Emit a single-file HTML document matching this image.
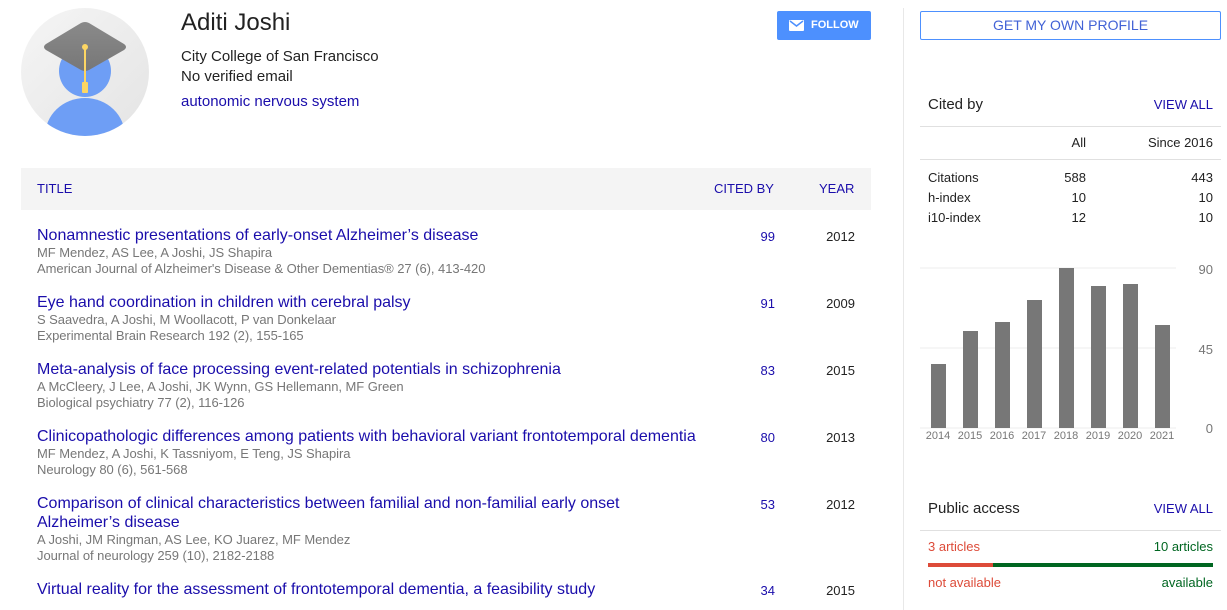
<!DOCTYPE html>
<html><head><meta charset="utf-8"><style>
*{margin:0;padding:0;box-sizing:border-box}
body{width:1227px;height:610px;overflow:hidden;background:#fff;font-family:"Liberation Sans",Arial,sans-serif;color:#222;position:relative}
.a{position:absolute;white-space:nowrap}
.lk{color:#1a0dab}
.t{font-size:16px;color:#1a0dab;line-height:19px}
.g{font-size:13px;color:#777;line-height:16px;letter-spacing:-0.05px}
.n{font-size:13px;color:#222;text-align:right}
.c{position:absolute;left:740px;width:35px;text-align:right;font-size:13px;color:#1a0dab}
.y{position:absolute;left:815px;width:40px;text-align:right;font-size:13px}
</style></head><body>
<svg class="a" style="left:20px;top:8px" width="130" height="130" viewBox="0 0 130 130">
<defs><clipPath id="c"><circle cx="65" cy="64" r="64"/></clipPath>
<linearGradient id="bg" x1="0" y1="0" x2="1" y2="1"><stop offset="0" stop-color="#f5f5f5"/><stop offset="1" stop-color="#e4e4e4"/></linearGradient>
<linearGradient id="cap" x1="0" y1="0" x2="0" y2="1"><stop offset="0" stop-color="#8a8a8a"/><stop offset="1" stop-color="#777"/></linearGradient></defs>
<circle cx="65" cy="64" r="64" fill="url(#bg)"/>
<g clip-path="url(#c)">
<circle cx="65" cy="63" r="26" fill="#6e9ef5"/>
<ellipse cx="65" cy="128" rx="40" ry="38" fill="#6e9ef5"/>
</g>
<path d="M61 15 Q65 13 69 15 L104 36 Q108 39 104 42 L69 62 Q65 64 61 62 L26 42 Q22 39 26 36 Z" fill="url(#cap)"/>
<line x1="65" y1="39" x2="65" y2="78" stroke="#fdd663" stroke-width="2"/>
<circle cx="65" cy="39" r="3" fill="#fdd663"/>
<rect x="62" y="74" width="6" height="11" rx="1" fill="#fdd663"/>
</svg>
<div class="a" style="left:181px;top:9px;font-size:24px;color:#222">Aditi Joshi</div>
<div class="a" style="left:181px;top:48px;font-size:15px">City College of San Francisco</div>
<div class="a" style="left:181px;top:68px;font-size:15px">No verified email</div>
<div class="a lk" style="left:181px;top:93px;font-size:15px">autonomic nervous system</div>
<div class="a" style="left:777px;top:11px;width:94px;height:29px;background:#4d90fe;border-radius:2px;color:#fff;font-size:11px;font-weight:bold;line-height:29px;padding-left:34px">FOLLOW
<svg class="a" style="left:12px;top:9px" width="15" height="11" viewBox="0 0 15 11"><rect width="15" height="11" rx="1" fill="#fff"/><path d="M1 1 L7.5 6 L14 1" stroke="#4d90fe" stroke-width="1.5" fill="none"/></svg></div>
<div class="a" style="left:903px;top:8px;width:1px;height:602px;background:#e8e8e8"></div>
<div class="a" style="left:920px;top:11px;width:301px;height:29px;border:1px solid #4d90fe;border-radius:2px;color:#4262d6;font-size:14px;line-height:27px;text-align:center">GET MY OWN PROFILE</div>

<div class="a" style="left:21px;top:168px;width:850px;height:42px;background:#f4f4f4"></div>
<div class="a lk" style="left:37px;top:181px;font-size:13px">TITLE</div>
<div class="a lk" style="left:714px;top:181px;font-size:13px">CITED BY</div>
<div class="a lk" style="left:819px;top:181px;font-size:13px">YEAR</div>

<div class="a" style="left:37px;top:226px">
<div class="t">Nonamnestic presentations of early-onset Alzheimer’s disease</div>
<div class="g">MF Mendez, AS Lee, A Joshi, JS Shapira</div>
<div class="g">American Journal of Alzheimer's Disease &amp; Other Dementias® 27 (6), 413-420</div></div>
<div class="a" style="left:37px;top:293px">
<div class="t">Eye hand coordination in children with cerebral palsy</div>
<div class="g">S Saavedra, A Joshi, M Woollacott, P van Donkelaar</div>
<div class="g">Experimental Brain Research 192 (2), 155-165</div></div>
<div class="a" style="left:37px;top:360px">
<div class="t">Meta-analysis of face processing event-related potentials in schizophrenia</div>
<div class="g">A McCleery, J Lee, A Joshi, JK Wynn, GS Hellemann, MF Green</div>
<div class="g">Biological psychiatry 77 (2), 116-126</div></div>
<div class="a" style="left:37px;top:427px">
<div class="t">Clinicopathologic differences among patients with behavioral variant frontotemporal dementia</div>
<div class="g">MF Mendez, A Joshi, K Tassniyom, E Teng, JS Shapira</div>
<div class="g">Neurology 80 (6), 561-568</div></div>
<div class="a" style="left:37px;top:494px">
<div class="t">Comparison of clinical characteristics between familial and non-familial early onset<br>Alzheimer’s disease</div>
<div class="g">A Joshi, JM Ringman, AS Lee, KO Juarez, MF Mendez</div>
<div class="g">Journal of neurology 259 (10), 2182-2188</div></div>
<div class="a" style="left:37px;top:580px">
<div class="t">Virtual reality for the assessment of frontotemporal dementia, a feasibility study</div></div>

<div class="c" style="top:229px">99</div>
<div class="c" style="top:296px">91</div>
<div class="c" style="top:363px">83</div>
<div class="c" style="top:430px">80</div>
<div class="c" style="top:497px">53</div>
<div class="c" style="top:583px">34</div>
<div class="y" style="top:229px">2012</div>
<div class="y" style="top:296px">2009</div>
<div class="y" style="top:363px">2015</div>
<div class="y" style="top:430px">2013</div>
<div class="y" style="top:497px">2012</div>
<div class="y" style="top:583px">2015</div>

<div class="a" style="left:928px;top:96px;font-size:15px">Cited by</div>
<div class="a lk" style="left:1150px;top:97px;width:63px;text-align:right;font-size:13px">VIEW ALL</div>
<div class="a" style="left:920px;top:126px;width:301px;height:1px;background:#e0e0e0"></div>
<div class="a n" style="left:1030px;top:135px;width:56px">All</div>
<div class="a n" style="left:1130px;top:135px;width:83px">Since 2016</div>
<div class="a" style="left:920px;top:159px;width:301px;height:1px;background:#e0e0e0"></div>
<div class="a" style="left:928px;top:168px;font-size:13px;line-height:20px">Citations<br>h-index<br>i10-index</div>
<div class="a n" style="left:1030px;top:168px;width:56px;line-height:20px">588<br>10<br>12</div>
<div class="a n" style="left:1130px;top:168px;width:83px;line-height:20px">443<br>10<br>10</div>

<svg class="a" style="left:920px;top:260px" width="307" height="185">
<line x1="0" y1="8" x2="256" y2="8" stroke="#eee"/>
<line x1="0" y1="88" x2="256" y2="88" stroke="#eee"/>
<line x1="0" y1="168" x2="256" y2="168" stroke="#eee"/>
<g fill="#777">
<rect x="11" y="104" width="15" height="64"/>
<rect x="43" y="71" width="15" height="97"/>
<rect x="75" y="62" width="15" height="106"/>
<rect x="107" y="40" width="15" height="128"/>
<rect x="139" y="8" width="15" height="160"/>
<rect x="171" y="26" width="15" height="142"/>
<rect x="203" y="24" width="15" height="144"/>
<rect x="235" y="65" width="15" height="103"/>
</g>
<g font-family="Liberation Sans,Arial,sans-serif" font-size="11" fill="#777" text-anchor="middle">
<text x="18" y="179">2014</text><text x="50" y="179">2015</text><text x="82" y="179">2016</text><text x="114" y="179">2017</text><text x="146" y="179">2018</text><text x="178" y="179">2019</text><text x="210" y="179">2020</text><text x="242" y="179">2021</text>
</g>
<g font-family="Liberation Sans,Arial,sans-serif" font-size="13" fill="#777" text-anchor="end">
<text x="293" y="14">90</text><text x="293" y="94">45</text><text x="293" y="173">0</text>
</g>
</svg>

<div class="a" style="left:928px;top:500px;font-size:15px">Public access</div>
<div class="a lk" style="left:1150px;top:501px;width:63px;text-align:right;font-size:13px">VIEW ALL</div>
<div class="a" style="left:920px;top:530px;width:301px;height:1px;background:#e0e0e0"></div>
<div class="a" style="left:928px;top:539px;font-size:13px;color:#dd4b39">3 articles</div>
<div class="a n" style="left:1120px;top:539px;width:93px;color:#006621">10 articles</div>
<div class="a" style="left:928px;top:563px;width:65px;height:4px;background:#dd4b39"></div>
<div class="a" style="left:993px;top:563px;width:220px;height:4px;background:#006621"></div>
<div class="a" style="left:928px;top:575px;font-size:13px;color:#dd4b39">not available</div>
<div class="a n" style="left:1120px;top:575px;width:93px;color:#006621">available</div>
</body></html>
